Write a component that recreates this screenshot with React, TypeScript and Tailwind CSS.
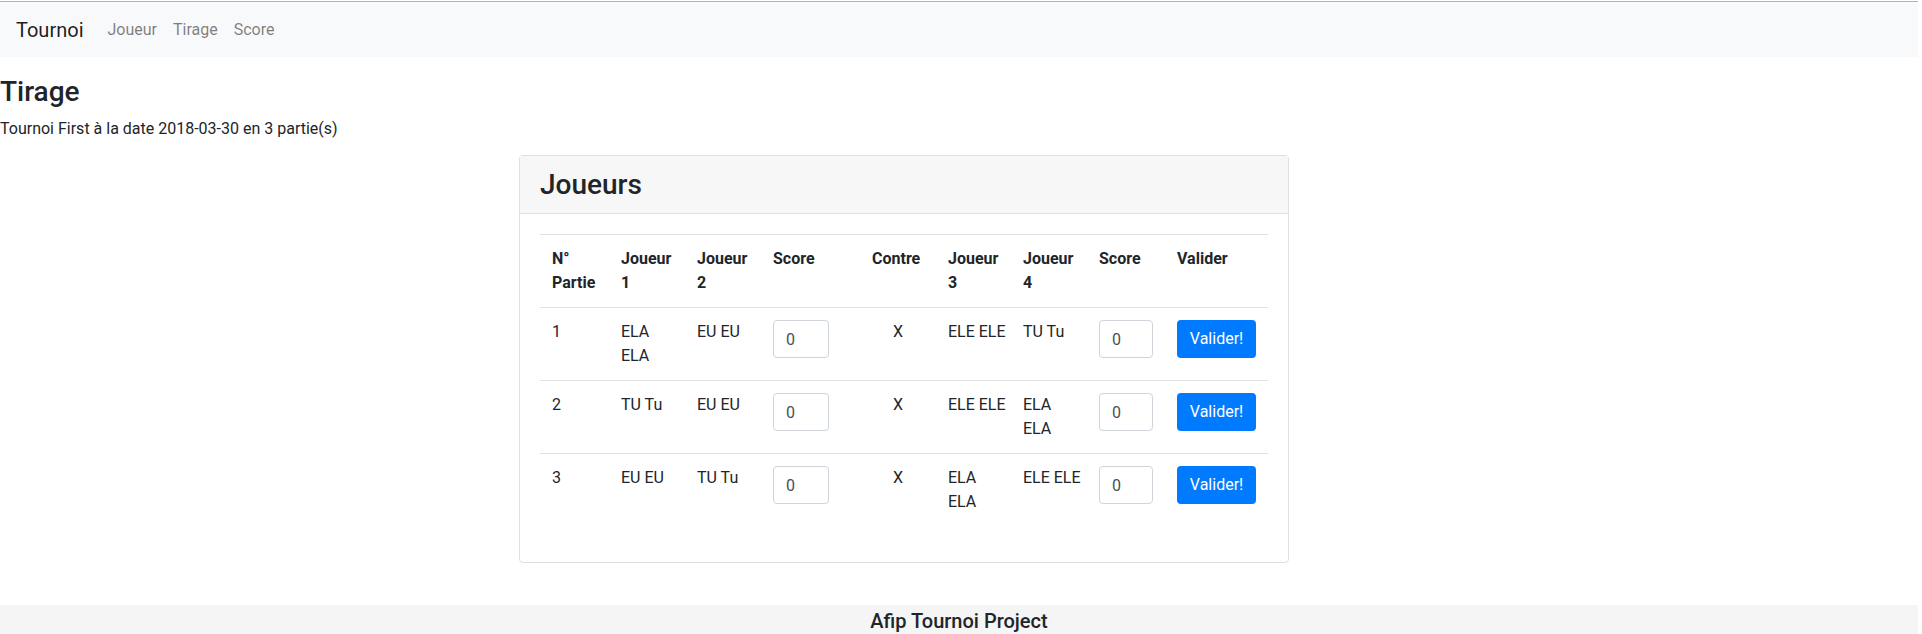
const font = { fontFamily: 'Roboto, "Liberation Sans", Arial, sans-serif' };

type Partie = {
    n: number;
    j1: string;
    j2: string;
    j3: string;
    j4: string;
};

const parties: Partie[] = [
    { n: 1, j1: "ELA ELA", j2: "EU EU", j3: "ELE ELE", j4: "TU Tu" },
    { n: 2, j1: "TU Tu", j2: "EU EU", j3: "ELE ELE", j4: "ELA ELA" },
    { n: 3, j1: "EU EU", j2: "TU Tu", j3: "ELA ELA", j4: "ELE ELE" },
];

// "ELA ELA" is the only name that breaks in the original table
const Nom = ({ nom }: { nom: string }) =>
    nom === "ELA ELA" ? (
        <span className="inline-block w-min">{nom}</span>
    ) : (
        <span className="whitespace-nowrap">{nom}</span>
    );

const ScoreInput = ({ width }: { width: string }) => (
    <input
        className={`${width} h-[38px] rounded border border-[#ced4da] bg-white px-3 text-base text-[#495057] outline-none`}
        defaultValue="0"
    />
);

const App = () => {
    return (
        <div className="w-[1918px] min-h-[634px] bg-white text-[#212529] text-base leading-6" style={font}>
            <div className="h-px bg-white" />

            {/* Navbar */}
            <nav className="flex h-[56px] items-center border-t border-[#b4b4b4] bg-[#f8f9fa] px-4">
                <a className="mr-4 text-[20px] leading-[30px] text-black/90" href="#">Tournoi</a>
                <ul className="flex flex-row">
                    <li className="px-2 text-black/50"><a href="#">Joueur</a></li>
                    <li className="px-2 text-black/50"><a href="#">Tirage</a></li>
                    <li className="px-2 text-black/50"><a href="#">Score</a></li>
                </ul>
            </nav>

            {/* Titre */}
            <h3 className="mt-[18px] mb-2 text-[28px] font-medium leading-[1.2]">Tirage</h3>
            <p className="mb-[14px]">Tournoi First à la date 2018-03-30 en 3 partie(s)</p>

            {/* Carte joueurs */}
            <div className="ml-[519px] w-[770px] rounded border border-[#dfdfdf] bg-white">
                <div className="border-b border-[#dfdfdf] bg-[#f7f7f7] px-5 py-3">
                    <h3 className="text-[28px] font-medium leading-[1.2]">Joueurs</h3>
                </div>
                <div className="p-5">
                    <table className="mb-4 w-[728px] table-fixed border-collapse text-left">
                        <thead>
                            <tr className="align-top">
                                <th className="w-[69px] border-t border-[#dee2e6] p-3 font-bold">N° Partie</th>
                                <th className="w-[76px] border-t border-[#dee2e6] p-3 font-bold">Joueur 1</th>
                                <th className="w-[76px] border-t border-[#dee2e6] p-3 font-bold">Joueur 2</th>
                                <th className="w-[99px] border-t border-[#dee2e6] p-3 font-bold">Score</th>
                                <th className="w-[76px] border-t border-[#dee2e6] p-3 font-bold">Contre</th>
                                <th className="w-[75px] border-t border-[#dee2e6] p-3 font-bold">Joueur 3</th>
                                <th className="w-[76px] border-t border-[#dee2e6] p-3 font-bold">Joueur 4</th>
                                <th className="w-[78px] border-t border-[#dee2e6] p-3 font-bold">Score</th>
                                <th className="w-[103px] border-t border-[#dee2e6] p-3 font-bold">Valider</th>
                            </tr>
                        </thead>
                        <tbody>
                            {parties.map((p) => (
                                <tr key={p.n} className="align-top">
                                    <td className="border-t border-[#dee2e6] p-3">{p.n}</td>
                                    <td className="border-t border-[#dee2e6] p-3"><Nom nom={p.j1} /></td>
                                    <td className="border-t border-[#dee2e6] p-3"><Nom nom={p.j2} /></td>
                                    <td className="border-t border-[#dee2e6] p-3"><ScoreInput width="w-[56px]" /></td>
                                    <td className="border-t border-[#dee2e6] p-3 text-center">X</td>
                                    <td className="border-t border-[#dee2e6] p-3"><Nom nom={p.j3} /></td>
                                    <td className="border-t border-[#dee2e6] p-3"><Nom nom={p.j4} /></td>
                                    <td className="border-t border-[#dee2e6] p-3"><ScoreInput width="w-[54px]" /></td>
                                    <td className="border-t border-[#dee2e6] p-3">
                                        <button className="h-[38px] w-[79px] rounded bg-[#007bff] text-base text-white">Valider!</button>
                                    </td>
                                </tr>
                            ))}
                        </tbody>
                    </table>
                </div>
            </div>

            {/* Footer */}
            <footer className="mt-[42px] h-[60px] bg-[#f5f5f5] pt-1 text-center">
                <h5 className="text-[20px] font-medium leading-[1.2]">Afip Tournoi Project</h5>
            </footer>
        </div>
    );
};

export default App;
